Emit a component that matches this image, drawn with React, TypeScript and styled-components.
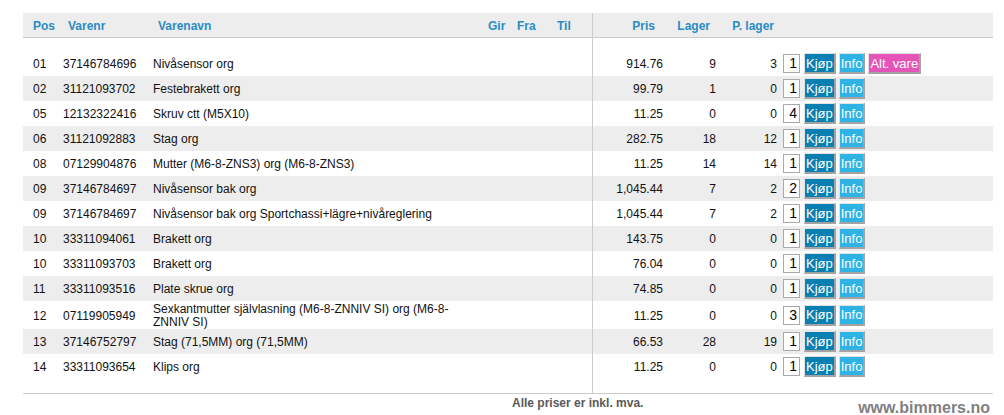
import { createGlobalStyle } from 'styled-components';
import styled from 'styled-components';

interface Part {
  pos: string;
  varenr: string;
  name: string;
  price: string;
  stock: number;
  pStock: number;
  qty: number;
  alt?: boolean;
}

const parts: Part[] = [
  { pos: '01', varenr: '37146784696', name: 'Nivåsensor org', price: '914.76', stock: 9, pStock: 3, qty: 1, alt: true },
  { pos: '02', varenr: '31121093702', name: 'Festebrakett org', price: '99.79', stock: 1, pStock: 0, qty: 1 },
  { pos: '05', varenr: '12132322416', name: 'Skruv ctt (M5X10)', price: '11.25', stock: 0, pStock: 0, qty: 4 },
  { pos: '06', varenr: '31121092883', name: 'Stag org', price: '282.75', stock: 18, pStock: 12, qty: 1 },
  { pos: '08', varenr: '07129904876', name: 'Mutter (M6-8-ZNS3) org (M6-8-ZNS3)', price: '11.25', stock: 14, pStock: 14, qty: 1 },
  { pos: '09', varenr: '37146784697', name: 'Nivåsensor bak org', price: '1,045.44', stock: 7, pStock: 2, qty: 2 },
  { pos: '09', varenr: '37146784697', name: 'Nivåsensor bak org Sportchassi+lägre+nivåreglering', price: '1,045.44', stock: 7, pStock: 2, qty: 1 },
  { pos: '10', varenr: '33311094061', name: 'Brakett org', price: '143.75', stock: 0, pStock: 0, qty: 1 },
  { pos: '10', varenr: '33311093703', name: 'Brakett org', price: '76.04', stock: 0, pStock: 0, qty: 1 },
  { pos: '11', varenr: '33311093516', name: 'Plate skrue org', price: '74.85', stock: 0, pStock: 0, qty: 1 },
  { pos: '12', varenr: '07119905949', name: 'Sexkantmutter självlasning (M6-8-ZNNIV SI) org (M6-8-ZNNIV SI)', price: '11.25', stock: 0, pStock: 0, qty: 3 },
  { pos: '13', varenr: '37146752797', name: 'Stag (71,5MM) org (71,5MM)', price: '66.53', stock: 28, pStock: 19, qty: 1 },
  { pos: '14', varenr: '33311093654', name: 'Klips org', price: '11.25', stock: 0, pStock: 0, qty: 1 },
];

const GlobalStyle = createGlobalStyle`
  body {
    margin: 0;
    background: #fff;
    font-family: "Liberation Sans", Arial, sans-serif;
    font-size: 12px;
    color: #111;
  }
`;

const Page = styled.div`
  width: 970px;
  padding: 13px 0 0 23px;
`;

const Table = styled.table`
  width: 970px;
  border-collapse: collapse;
  table-layout: fixed;
`;

const HeadRow = styled.tr`
  background: #ededed;
  height: 24px;
  border-bottom: 1px solid #cccccc;
`;

const Th = styled.th<{ $align?: string; $pl?: number; $pr?: number; $sep?: boolean }>`
  padding: 3px ${(p) => p.$pr ?? 0}px 0 ${(p) => p.$pl ?? 0}px;
  text-align: ${(p) => p.$align ?? 'left'};
  font-weight: bold;
  font-size: 12px;
  color: #2a8cc4;
  white-space: nowrap;
  border-left: ${(p) => (p.$sep ? '1px solid #cccccc' : 'none')};
`;

const Row = styled.tr<{ $shade?: boolean; $h?: number }>`
  background: ${(p) => (p.$shade ? '#ededed' : '#ffffff')};
  height: ${(p) => p.$h ?? 25}px;
`;

const Td = styled.td<{ $align?: string; $pl?: number; $pr?: number; $sep?: boolean }>`
  padding: 2px ${(p) => p.$pr ?? 0}px 0 ${(p) => p.$pl ?? 0}px;
  text-align: ${(p) => p.$align ?? 'left'};
  vertical-align: middle;
  line-height: 13px;
  border-left: ${(p) => (p.$sep ? '1px solid #cccccc' : 'none')};
`;

const Actions = styled.div`
  display: flex;
  align-items: center;
  gap: 3px;
  margin-top: -2px;
`;

const Qty = styled.div`
  box-sizing: border-box;
  width: 17px;
  height: 19px;
  margin-right: 1px;
  border: 1px solid #a9a9a9;
  background: #fff;
  font-size: 14px;
  line-height: 16px;
  text-align: right;
  padding-right: 2px;
  color: #000;
`;

const Btn = styled.button<{ $bg: string }>`
  box-sizing: border-box;
  height: 21px;
  padding: 0 1px;
  margin: 0;
  font-family: "Liberation Sans", Arial, sans-serif;
  font-size: 13px;
  line-height: 17px;
  color: #fff;
  background: ${(p) => p.$bg};
  border-style: solid;
  border-width: 1px 2px 2px 1px;
  border-color: #e2e2e2 #a3a3a3 #a3a3a3 #e2e2e2;
  cursor: pointer;
`;

const Footer = styled.div`
  border-top: 1px solid #cccccc;
  display: flex;
  align-items: flex-start;
`;

const Note = styled.div`
  margin: 2px 0 0 489px;
  font-weight: bold;
  font-size: 12px;
  color: #5a5a5a;
`;

const Brand = styled.div`
  margin: 5px 3px 0 auto;
  font-weight: bold;
  font-size: 16px;
  color: #808080;
`;

const Spacer = ({ h }: { h: number }) => (
  <Row $h={h}>
    <Td colSpan={6} />
    <Td $sep />
    <Td />
    <Td />
    <Td />
  </Row>
);

export default function App() {
  return (
    <Page>
      <GlobalStyle />
      <Table>
        <colgroup>
          <col style={{ width: 35 }} />
          <col style={{ width: 90 }} />
          <col style={{ width: 330 }} />
          <col style={{ width: 29 }} />
          <col style={{ width: 40 }} />
          <col style={{ width: 45 }} />
          <col style={{ width: 76 }} />
          <col style={{ width: 50 }} />
          <col style={{ width: 62 }} />
          <col style={{ width: 213 }} />
        </colgroup>
        <thead>
          <HeadRow>
            <Th $pl={10}>Pos</Th>
            <Th $pl={10}>Varenr</Th>
            <Th $pl={10}>Varenavn</Th>
            <Th $pl={10}>Gir</Th>
            <Th $pl={10}>Fra</Th>
            <Th $pl={10}>Til</Th>
            <Th $sep $align="right" $pr={13}>Pris</Th>
            <Th $align="right" $pr={8}>Lager</Th>
            <Th $align="right" $pr={6}>P. lager</Th>
            <Th />
          </HeadRow>
        </thead>
        <tbody>
          <Spacer h={14} />
          {parts.map((p, i) => (
            <Row key={i} $shade={i % 2 === 1} $h={p.name.length > 60 ? 28 : 25}>
              <Td $pl={10}>{p.pos}</Td>
              <Td $pl={5}>{p.varenr}</Td>
              <Td $pl={5} $pr={5}>{p.name}</Td>
              <Td />
              <Td />
              <Td />
              <Td $sep $align="right" $pr={5}>{p.price}</Td>
              <Td $align="right" $pr={2}>{p.stock}</Td>
              <Td $align="right" $pr={3}>{p.pStock}</Td>
              <Td $pl={3}>
                <Actions>
                  <Qty>{p.qty}</Qty>
                  <Btn $bg="#0a80b2">Kjøp</Btn>
                  <Btn $bg="#2fb3e5">Info</Btn>
                  {p.alt && <Btn $bg="#e555b8">Alt. vare</Btn>}
                </Actions>
              </Td>
            </Row>
          ))}
          <Spacer h={14} />
        </tbody>
      </Table>
      <Footer>
        <Note>Alle priser er inkl. mva.</Note>
        <Brand>www.bimmers.no</Brand>
      </Footer>
    </Page>
  );
}
